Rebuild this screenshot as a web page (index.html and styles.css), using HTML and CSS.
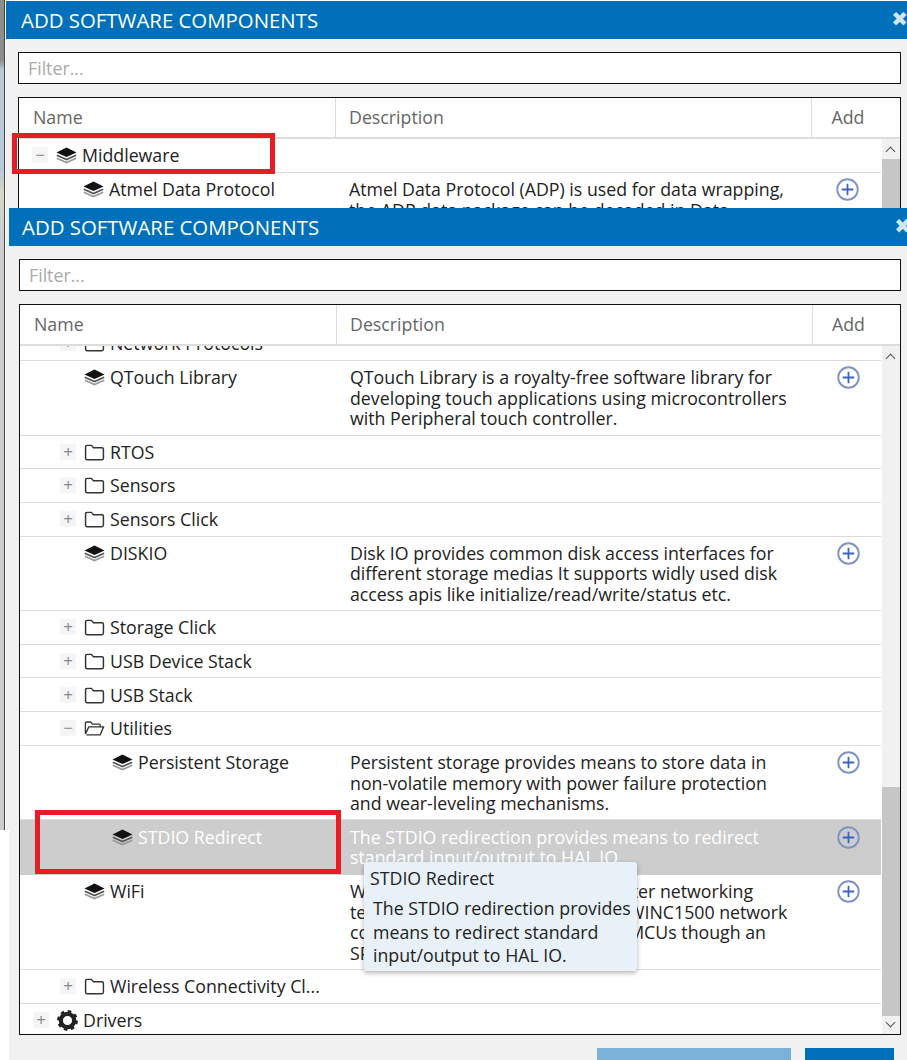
FILE: index.html
```html
<!DOCTYPE html>
<html>

<head>
<title>Add Software Components</title>
<meta charset="utf-8">
<link rel="stylesheet" href="styles.css">
</head>

<body>

<svg class="defs" width="0" height="0">
	<symbol id="stack" viewBox="0 0 21 17">
		<path d="M10.5 .5 L20.5 5.5 L10.5 10 L.5 5.5 Z" fill="#111"/>
		<path d="M.8 8.2 L10.5 12.6 L20.2 8.2" fill="none" stroke="#555" stroke-width="1.6"/>
		<path d="M.8 11.2 L10.5 15.6 L20.2 11.2" fill="none" stroke="#999" stroke-width="1.6"/>
	</symbol>
	<symbol id="folder" viewBox="0 0 20 16">
		<path d="M1.5 3 Q1.5 1.2 3 1.2 H7 L9 3.5 H17 Q18.5 3.5 18.5 5 V13.2 Q18.5 14.8 17 14.8 H3 Q1.5 14.8 1.5 13.2 Z" fill="none" stroke="#333" stroke-width="1.4"/>
	</symbol>
	<symbol id="folder-open" viewBox="0 0 22 16">
		<path d="M1.5 13.5 V2.5 Q1.5 1.2 3 1.2 H7 L9 3.5 H16 Q17 3.5 17 4.5 V6.3 M1.5 13.8 L5 6.3 H20.5 L17 14.6 H2.5" fill="none" stroke="#333" stroke-width="1.4"/>
	</symbol>
	<symbol id="gear" viewBox="0 0 22 22">
		<circle cx="11" cy="11" r="7" fill="none" stroke="#222" stroke-width="4.4"/>
		<circle cx="11" cy="11" r="9.2" fill="none" stroke="#222" stroke-width="3.4" stroke-dasharray="3.6 3.62"/>
	</symbol>
	<symbol id="add" viewBox="0 0 22 22">
		<circle cx="11" cy="11" r="9.8" fill="none" stroke="#7f93c6" stroke-width="1.8"/>
		<path d="M5.5 11 H16.5 M11 5.5 V16.5" stroke="#3f63b8" stroke-width="1.7"/>
	</symbol>
</svg>

<div class="strip"></div>

<!-- first screenshot, mostly covered by the second -->
<div class="dialog dialog-back">
	<div class="title">ADD SOFTWARE COMPONENTS<span class="close">✖</span></div>
	<div class="filter">Filter...</div>
	<div class="table">
		<div class="head">
			<div class="c-name">Name</div>
			<div class="c-desc">Description</div>
			<div class="c-add">Add</div>
		</div>
		<div class="body">
			<div class="rows">
				<div class="row h34">
					<div class="c-name lvl0"><span class="tog">−</span><svg class="ic"><use href="#stack"/></svg>Middleware</div>
				</div>
				<div class="row">
					<div class="c-name lvl2"><svg class="ic"><use href="#stack"/></svg>Atmel Data Protocol</div>
					<div class="c-desc">Atmel Data Protocol (ADP) is used for data wrapping, the ADP data package can be decoded in Data</div>
					<div class="c-add"><svg class="plus"><use href="#add"/></svg></div>
				</div>
			</div>
			<div class="sbar">
				<div class="arrow up"></div>
				<div class="thumb thumb-back"></div>
			</div>
		</div>
	</div>
</div>
<div class="mark mark-1"></div>

<div class="dialog dialog-front">
	<div class="title">ADD SOFTWARE COMPONENTS<span class="close">✖</span></div>
	<div class="filter">Filter...</div>
	<div class="table">
		<div class="head">
			<div class="c-name">Name</div>
			<div class="c-desc">Description</div>
			<div class="c-add">Add</div>
		</div>
		<div class="body">
			<div class="rows">
				<div class="row clipped">
					<div class="c-name lvl1"><span class="tog">+</span><svg class="ic"><use href="#folder"/></svg>Network Protocols</div>
				</div>
				<div class="row h74">
					<div class="c-name lvl2"><svg class="ic"><use href="#stack"/></svg>QTouch Library</div>
					<div class="c-desc">QTouch Library is a royalty-free software library for developing touch applications using microcontrollers with Peripheral touch controller.</div>
					<div class="c-add"><svg class="plus"><use href="#add"/></svg></div>
				</div>
				<div class="row h34">
					<div class="c-name lvl1"><span class="tog">+</span><svg class="ic"><use href="#folder"/></svg>RTOS</div>
				</div>
				<div class="row h34">
					<div class="c-name lvl1"><span class="tog">+</span><svg class="ic"><use href="#folder"/></svg>Sensors</div>
				</div>
				<div class="row h34">
					<div class="c-name lvl1"><span class="tog">+</span><svg class="ic"><use href="#folder"/></svg>Sensors Click</div>
				</div>
				<div class="row h74">
					<div class="c-name lvl2"><svg class="ic"><use href="#stack"/></svg>DISKIO</div>
					<div class="c-desc">Disk IO provides common disk access interfaces for different storage medias It supports widly used disk access apis like initialize/read/write/status etc.</div>
					<div class="c-add"><svg class="plus"><use href="#add"/></svg></div>
				</div>
				<div class="row h34">
					<div class="c-name lvl1"><span class="tog">+</span><svg class="ic"><use href="#folder"/></svg>Storage Click</div>
				</div>
				<div class="row h34">
					<div class="c-name lvl1"><span class="tog">+</span><svg class="ic"><use href="#folder"/></svg>USB Device Stack</div>
				</div>
				<div class="row h34">
					<div class="c-name lvl1"><span class="tog">+</span><svg class="ic"><use href="#folder"/></svg>USB Stack</div>
				</div>
				<div class="row h34">
					<div class="c-name lvl1"><span class="tog">−</span><svg class="ic"><use href="#folder-open"/></svg>Utilities</div>
				</div>
				<div class="row h74">
					<div class="c-name lvl3"><svg class="ic"><use href="#stack"/></svg>Persistent Storage</div>
					<div class="c-desc">Persistent storage provides means to store data in non-volatile memory with power failure protection and wear-leveling mechanisms.</div>
					<div class="c-add"><svg class="plus"><use href="#add"/></svg></div>
				</div>
				<div class="row selected">
					<div class="c-name lvl3"><svg class="ic"><use href="#stack"/></svg>STDIO Redirect</div>
					<div class="c-desc">The STDIO redirection provides means to redirect standard input/output to HAL IO.</div>
					<div class="c-add"><svg class="plus"><use href="#add"/></svg></div>
				</div>
				<div class="row h94">
					<div class="c-name lvl2"><svg class="ic"><use href="#stack"/></svg>WiFi</div>
					<div class="c-desc">WiFi Library provides means for inter networking<br>technologies using Microchip's ATWINC1500 network<br>controller and it connects to host MCUs though an<br>SPI interface.</div>
					<div class="c-add"><svg class="plus"><use href="#add"/></svg></div>
				</div>
				<div class="row h34">
					<div class="c-name lvl1"><span class="tog">+</span><svg class="ic"><use href="#folder"/></svg>Wireless Connectivity Cl...</div>
				</div>
				<div class="row h34">
					<div class="c-name lvl0"><span class="tog">+</span><svg class="ic ic-gear"><use href="#gear"/></svg>Drivers</div>
				</div>
			</div>
			<div class="sbar">
				<div class="arrow up"></div>
				<div class="thumb"></div>
				<div class="arrow down"></div>
			</div>
		</div>
	</div>
	<div class="buttons">
		<div class="btn btn-off"></div>
		<div class="btn btn-on"></div>
	</div>
</div>

<div class="tip">
	<div class="tip-title">STDIO Redirect</div>
	<div class="tip-text">The STDIO redirection provides means to redirect standard input/output to HAL IO.</div>
</div>
<div class="mark mark-2"></div>

</body>

</html>
```

FILE: styles.css
```css
html, body {
	margin: 0;
	height: 1060px;
	overflow: hidden;
}

body {
	position: relative;
	background-color: #fff;
	font-family: "Open Sans", sans-serif;
	font-size: 17.75px;
	color: #222;
}

.defs {
	position: absolute;
}

.strip {
	position: absolute;
	left: 0;
	top: 0;
	width: 4px;
	height: 830px;
	background: linear-gradient(#8d8d8d 0, #8d8d8d 60px, #b7cbd8 70px, #b7cbd8 170px, #d8d8c6 195px, #cdcdcd 230px);
	border-right: 1px solid #444;
}

.dialog {
	position: absolute;
	background-color: #f1f1f1;
	overflow: hidden;
}

.dialog-back {
	left: 6px;
	top: 1px;
	width: 901px;
	height: 829px;
}

.dialog-front {
	left: 9px;
	top: 208px;
	width: 898px;
	height: 852px;
}

.title {
	position: relative;
	height: 38px;
	padding-left: 13px;
	background-color: #0070ba;
	color: #fff;
	font-size: 20.4px;
	line-height: 39px;
}

.dialog-back .title {
	padding-left: 15px;
}

.close {
	position: absolute;
	right: -1px;
	top: 0;
	font-family: "DejaVu Sans", sans-serif;
	font-size: 20px;
	line-height: 37px;
	color: #d5e6f3;
}

.dialog-front .close {
	right: -4px;
}

.filter {
	height: 30px;
	margin: 13px 6px 0 12px;
	padding-left: 9px;
	background-color: #fff;
	border: 1px solid #111;
	color: #aaa;
	line-height: 30px;
}

.dialog-front .filter {
	margin-left: 10px;
}

.table {
	margin: 13px 6px 0 12px;
	height: 729px;
	background-color: #fff;
	border: 1px solid #111;
	overflow: hidden;
}

.dialog-front .table {
	margin-left: 10px;
}

.head {
	display: flex;
	height: 39px;
	border-bottom: 2px solid #ddd;
	color: #666;
	line-height: 38px;
}

.c-name {
	display: flex;
	align-items: flex-start;
	width: 317px;
	flex: none;
	box-sizing: border-box;
	white-space: nowrap;
}

.c-desc {
	width: 476px;
	flex: none;
	padding: 0 14px 0 13px;
	box-sizing: border-box;
}

.c-add {
	flex: 1;
	padding-left: 2px;
	text-align: center;
}

.head .c-name {
	display: block;
	padding-left: 14px;
	border-right: 1px solid #ddd;
}

.head .c-desc {
	border-right: 1px solid #ddd;
}

.head .c-add {
	padding: 0 16px 0 0;
}

.body {
	display: flex;
	height: 688px;
}

.rows {
	flex: 1;
	overflow: hidden;
}

.row {
	display: flex;
	box-sizing: border-box;
	padding-top: 6.3px;
	border-bottom: 1px solid #ddd;
	line-height: 20.6px;
	overflow: hidden;
}

.h34 { height: 33.7px; }
.h74 { height: 74.5px; }
.h94 { height: 95px; }

.clipped {
	height: 15px;
	padding-top: 0;
}

.clipped .c-name {
	margin-top: -13px;
}

.selected {
	height: 54.5px;
	background-color: #cdcdcd;
	border-bottom: none;
	color: #fff;
}

.lvl0 { padding-left: 13px; }
.lvl1 { padding-left: 40px; }
.lvl2 { padding-left: 64px; }
.lvl3 { padding-left: 92px; }

.tog {
	width: 16px;
	height: 16px;
	margin: 2px 8px 0 0;
	background-color: #f5f5f5;
	color: #888;
	font-size: 17px;
	line-height: 15px;
	text-align: center;
	flex: none;
}

.ic {
	width: 21px;
	height: 17px;
	margin: 2px 5px 0 0;
	flex: none;
}

.ic-gear {
	height: 21px;
	margin-top: 0;
}

.plus {
	width: 23px;
	height: 23px;
	margin-top: -1px;
}

.sbar {
	position: relative;
	width: 18px;
	flex: none;
	background-color: #f1f1f1;
	border-left: 1px solid #fff;
}

.arrow {
	position: absolute;
	left: 5px;
	width: 6px;
	height: 6px;
	border-left: 1.5px solid #555;
	border-top: 1.5px solid #555;
}

.arrow.up {
	top: 9px;
	transform: rotate(45deg);
}

.arrow.down {
	bottom: 8px;
	transform: rotate(225deg);
}

.thumb {
	position: absolute;
	left: 0;
	right: 0;
	top: 441px;
	height: 229px;
	background-color: #c6c6c6;
}

.thumb-back {
	top: 20px;
	height: 100px;
}

.buttons {
	display: flex;
	justify-content: flex-end;
	gap: 14px;
	margin: 13px 13px 0 0;
}

.btn {
	height: 30px;
}

.btn-off {
	width: 194px;
	background-color: #7ab2d8;
}

.btn-on {
	width: 89px;
	background-color: #0070ba;
}

.tip {
	position: absolute;
	left: 364px;
	top: 862px;
	width: 273px;
	height: 109px;
	box-sizing: border-box;
	padding: 5px 3px 4px 6px;
	background-color: #e8f1f8;
	border-radius: 3px;
	box-shadow: 0 2px 5px rgba(0, 0, 0, 0.3);
	line-height: 23.4px;
}

.tip-text {
	margin-top: 7px;
	padding-left: 3px;
}

.mark {
	position: absolute;
	box-sizing: border-box;
	border: 5px solid #e81c25;
}

.mark-1 {
	left: 12px;
	top: 133px;
	width: 263px;
	height: 41px;
}

.mark-2 {
	left: 35px;
	top: 810px;
	width: 306px;
	height: 64px;
}
```
